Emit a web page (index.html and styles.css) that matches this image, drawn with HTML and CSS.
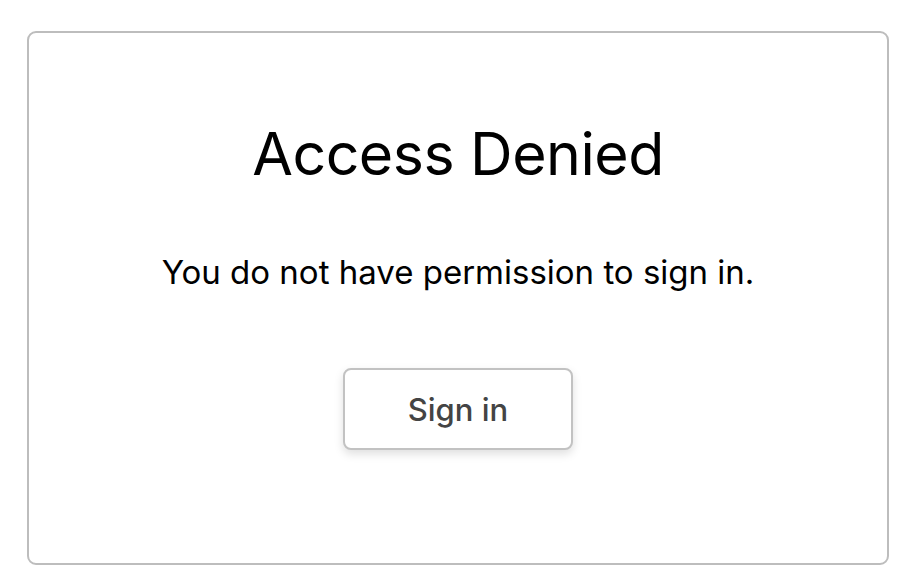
FILE: index.html
```html
<!DOCTYPE html>
<html lang="en">
<head>
<meta charset="utf-8">
<title>Access Denied</title>
<link rel="stylesheet" href="styles.css">
</head>
<body>
<main class="page">
  <section class="card">
    <h1 class="title">Access Denied</h1>
    <p class="message">You do not have permission to sign in.</p>
    <button class="signin" type="button">Sign in</button>
  </section>
</main>
</body>
</html>
```

FILE: styles.css
```css
html, body {
  margin: 0;
  padding: 0;
  background: #ffffff;
}

body {
  font-family: "Inter", "Liberation Sans", sans-serif;
  color: #000000;
}

.page {
  box-sizing: border-box;
  width: 910px;
  height: 586px;
  padding: 31px 21px 21px 27px;
  display: flex;
}

.card {
  box-sizing: border-box;
  flex: 1;
  border: 2px solid #bdbdbd;
  border-radius: 9px;
  display: flex;
  flex-direction: column;
  align-items: center;
  padding-top: 86px;
}

.title {
  margin: 0;
  font-size: 59px;
  font-weight: 400;
  line-height: 70px;
  letter-spacing: -0.5px;
}

.message {
  margin: 63px 0 0 0;
  font-size: 33px;
  line-height: 40px;
}

.signin {
  margin-top: 76px;
  box-sizing: border-box;
  width: 230px;
  height: 82px;
  background: #ffffff;
  border: 2px solid #c2c2c2;
  border-radius: 8px;
  box-shadow: 0 4px 10px rgba(0, 0, 0, 0.13);
  font-family: "Inter", "Liberation Sans", sans-serif;
  font-size: 31px;
  font-weight: 500;
  color: #444444;
  cursor: pointer;
}
```
